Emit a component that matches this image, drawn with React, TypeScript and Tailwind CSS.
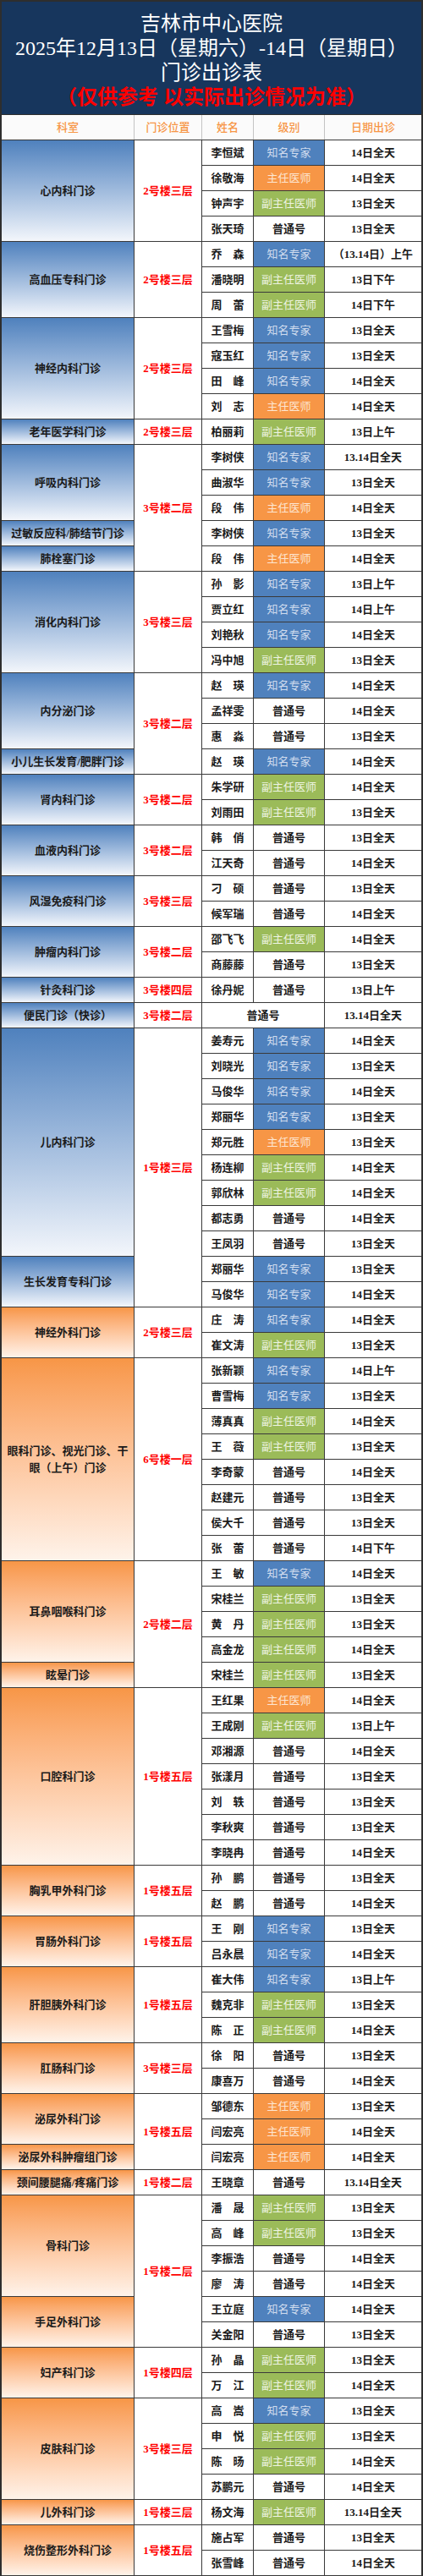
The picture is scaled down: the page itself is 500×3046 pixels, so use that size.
type Rank = "z" | "r" | "f" | "p";
type Row = [string | null, Rank, string];
type Dept = { name: string; rows: Row[] };
type Group = { loc: string; tone: "blue" | "orange"; depts: Dept[] };

const rankStyle: Record<Rank, { label: string; cls: string }> = {
  z: { label: "知名专家", cls: "bg-[#4f81bd] text-[#d0dcee] font-normal" },
  r: { label: "主任医师", cls: "bg-[#f79646] text-[#fde6d2] font-normal" },
  f: { label: "副主任医师", cls: "bg-[#9bbb59] text-[#eef4e2] font-normal" },
  p: { label: "普通号", cls: "bg-white text-[#1a1a1a] font-bold" },
};

// heights for dept cells, n rows of 30px
const heights: Record<number, string> = {
  1: "h-[30px]",
  2: "h-[60px]",
  3: "h-[90px]",
  4: "h-[120px]",
  5: "h-[150px]",
  6: "h-[180px]",
  7: "h-[210px]",
  8: "h-[240px]",
  9: "h-[270px]",
};

const groups: Group[] = [
  { loc: "2号楼三层", tone: "blue", depts: [{ name: "心内科门诊", rows: [["李恒斌", "z", "14日全天"], ["徐敬海", "r", "14日全天"], ["钟声宇", "f", "13日全天"], ["张天琦", "p", "13日全天"]] }] },
  { loc: "2号楼三层", tone: "blue", depts: [{ name: "高血压专科门诊", rows: [["乔　森", "z", "（13.14日）上午"], ["潘晓明", "f", "13日下午"], ["周　蕾", "f", "14日下午"]] }] },
  { loc: "2号楼三层", tone: "blue", depts: [{ name: "神经内科门诊", rows: [["王雪梅", "z", "13日全天"], ["寇玉红", "z", "13日全天"], ["田　峰", "z", "14日全天"], ["刘　志", "r", "14日全天"]] }] },
  { loc: "2号楼三层", tone: "blue", depts: [{ name: "老年医学科门诊", rows: [["柏丽莉", "f", "13日上午"]] }] },
  {
    loc: "3号楼二层",
    tone: "blue",
    depts: [
      { name: "呼吸内科门诊", rows: [["李树侠", "z", "13.14日全天"], ["曲淑华", "z", "13日全天"], ["段　伟", "r", "14日全天"]] },
      { name: "过敏反应科/肺结节门诊", rows: [["李树侠", "z", "13日全天"]] },
      { name: "肺栓塞门诊", rows: [["段　伟", "r", "14日全天"]] },
    ],
  },
  { loc: "3号楼三层", tone: "blue", depts: [{ name: "消化内科门诊", rows: [["孙　影", "z", "13日上午"], ["贾立红", "z", "14日上午"], ["刘艳秋", "z", "14日全天"], ["冯中旭", "f", "13日全天"]] }] },
  {
    loc: "3号楼二层",
    tone: "blue",
    depts: [
      { name: "内分泌门诊", rows: [["赵　瑛", "z", "14日全天"], ["孟祥雯", "p", "14日全天"], ["惠　淼", "p", "13日全天"]] },
      { name: "小儿生长发育/肥胖门诊", rows: [["赵　瑛", "z", "14日全天"]] },
    ],
  },
  { loc: "3号楼二层", tone: "blue", depts: [{ name: "肾内科门诊", rows: [["朱学研", "f", "14日全天"], ["刘雨田", "f", "13日全天"]] }] },
  { loc: "3号楼二层", tone: "blue", depts: [{ name: "血液内科门诊", rows: [["韩　俏", "p", "13日全天"], ["江天奇", "p", "14日全天"]] }] },
  { loc: "3号楼三层", tone: "blue", depts: [{ name: "风湿免疫科门诊", rows: [["刁　硕", "p", "13日全天"], ["候军瑞", "p", "14日全天"]] }] },
  { loc: "3号楼二层", tone: "blue", depts: [{ name: "肿瘤内科门诊", rows: [["邵飞飞", "f", "14日全天"], ["商藤藤", "p", "13日全天"]] }] },
  { loc: "3号楼四层", tone: "blue", depts: [{ name: "针灸科门诊", rows: [["徐丹妮", "p", "13日上午"]] }] },
  { loc: "3号楼二层", tone: "blue", depts: [{ name: "便民门诊（快诊）", rows: [[null, "p", "13.14日全天"]] }] },
  {
    loc: "1号楼三层",
    tone: "blue",
    depts: [
      {
        name: "儿内科门诊",
        rows: [
          ["姜寿元", "z", "14日全天"],
          ["刘晓光", "z", "13日全天"],
          ["马俊华", "z", "14日全天"],
          ["郑丽华", "z", "13日全天"],
          ["郑元胜", "r", "13日全天"],
          ["杨连柳", "f", "14日全天"],
          ["郭欣林", "f", "14日全天"],
          ["都志勇", "p", "14日全天"],
          ["王凤羽", "p", "13日全天"],
        ],
      },
      { name: "生长发育专科门诊", rows: [["郑丽华", "z", "13日全天"], ["马俊华", "z", "14日全天"]] },
    ],
  },
  { loc: "2号楼三层", tone: "orange", depts: [{ name: "神经外科门诊", rows: [["庄　涛", "z", "14日全天"], ["崔文涛", "f", "13日全天"]] }] },
  {
    loc: "6号楼一层",
    tone: "orange",
    depts: [
      {
        name: "眼科门诊、视光门诊、干\n眼（上午）门诊",
        rows: [
          ["张新颖", "z", "14日上午"],
          ["曹雪梅", "z", "13日全天"],
          ["薄真真", "f", "14日全天"],
          ["王　薇", "f", "13日全天"],
          ["李奇蒙", "p", "14日全天"],
          ["赵建元", "p", "13日全天"],
          ["侯大千", "p", "13日全天"],
          ["张　蕾", "p", "14日下午"],
        ],
      },
    ],
  },
  {
    loc: "2号楼二层",
    tone: "orange",
    depts: [
      { name: "耳鼻咽喉科门诊", rows: [["王　敏", "z", "14日全天"], ["宋桂兰", "f", "13日全天"], ["黄　丹", "f", "13日全天"], ["高金龙", "f", "14日全天"]] },
      { name: "眩晕门诊", rows: [["宋桂兰", "f", "13日全天"]] },
    ],
  },
  {
    loc: "1号楼五层",
    tone: "orange",
    depts: [
      {
        name: "口腔科门诊",
        rows: [
          ["王红果", "r", "14日全天"],
          ["王成刚", "f", "13日上午"],
          ["邓湘源", "p", "14日全天"],
          ["张漾月", "p", "13日全天"],
          ["刘　轶", "p", "13日全天"],
          ["李秋爽", "p", "13日全天"],
          ["李晓冉", "p", "14日全天"],
        ],
      },
    ],
  },
  { loc: "1号楼五层", tone: "orange", depts: [{ name: "胸乳甲外科门诊", rows: [["孙　鹏", "p", "13日全天"], ["赵　鹏", "p", "14日全天"]] }] },
  { loc: "1号楼五层", tone: "orange", depts: [{ name: "胃肠外科门诊", rows: [["王　刚", "z", "13日全天"], ["吕永晨", "z", "14日全天"]] }] },
  { loc: "1号楼五层", tone: "orange", depts: [{ name: "肝胆胰外科门诊", rows: [["崔大伟", "z", "13日上午"], ["魏克非", "f", "13日全天"], ["陈　正", "f", "14日全天"]] }] },
  { loc: "3号楼三层", tone: "orange", depts: [{ name: "肛肠科门诊", rows: [["徐　阳", "p", "13日全天"], ["康喜万", "p", "14日全天"]] }] },
  {
    loc: "1号楼五层",
    tone: "orange",
    depts: [
      { name: "泌尿外科门诊", rows: [["邹德东", "r", "13日全天"], ["闫宏亮", "r", "14日全天"]] },
      { name: "泌尿外科肿瘤组门诊", rows: [["闫宏亮", "r", "14日全天"]] },
    ],
  },
  { loc: "1号楼二层", tone: "orange", depts: [{ name: "颈间腰腿痛/疼痛门诊", rows: [["王晓章", "p", "13.14日全天"]] }] },
  {
    loc: "1号楼二层",
    tone: "orange",
    depts: [
      { name: "骨科门诊", rows: [["潘　晟", "f", "13日全天"], ["高　峰", "f", "13日全天"], ["李振浩", "p", "14日全天"], ["廖　涛", "p", "14日全天"]] },
      { name: "手足外科门诊", rows: [["王立庭", "z", "14日全天"], ["关金阳", "p", "13日全天"]] },
    ],
  },
  { loc: "1号楼四层", tone: "orange", depts: [{ name: "妇产科门诊", rows: [["孙　晶", "f", "13日全天"], ["万　江", "f", "14日全天"]] }] },
  { loc: "3号楼三层", tone: "orange", depts: [{ name: "皮肤科门诊", rows: [["高　嵩", "z", "13日全天"], ["申　悦", "f", "13日全天"], ["陈　旸", "f", "14日全天"], ["苏鹏元", "p", "14日全天"]] }] },
  { loc: "1号楼三层", tone: "orange", depts: [{ name: "儿外科门诊", rows: [["杨文海", "f", "13.14日全天"]] }] },
  { loc: "1号楼五层", tone: "orange", depts: [{ name: "烧伤整形外科门诊", rows: [["施占军", "p", "13日全天"], ["张雪峰", "p", "14日全天"]] }] },
];

function DataRow({ row }: { row: Row }) {
  const [name, rank, date] = row;
  const r = rankStyle[rank];
  return (
    <div className="flex h-[30px] border-b border-[#3a3a3a]">
      {name === null ? (
        <div className="flex w-[145px] items-center justify-center border-r border-[#3a3a3a] font-bold">
          {r.label}
        </div>
      ) : (
        <>
          <div className="flex w-[61px] items-center justify-center border-r border-[#3a3a3a] font-bold">
            {name}
          </div>
          <div className={`flex w-[84px] items-center justify-center border-r border-[#3a3a3a] ${r.cls}`}>
            {r.label}
          </div>
        </>
      )}
      <div className="flex flex-1 items-center justify-center font-semibold">{date}</div>
    </div>
  );
}

function GroupBlock({ group }: { group: Group }) {
  const grad =
    group.tone === "blue"
      ? "bg-linear-to-b from-[#4f81bd] to-[#f3f6fb]"
      : "bg-linear-to-b from-[#f79646] to-[#fef3ea]";
  return (
    <div className="flex">
      <div className="flex w-[157px] flex-col border-r border-[#3a3a3a]">
        {group.depts.map((d) => (
          <div
            key={d.name}
            className={`flex items-center justify-center border-b border-[#3a3a3a] px-1 text-center font-bold whitespace-pre-line text-[#1a1a1a] ${heights[d.rows.length]} ${grad}`}
          >
            {d.name}
          </div>
        ))}
      </div>
      <div className="flex w-[80px] items-center justify-center border-r border-b border-[#3a3a3a] font-bold text-[#ff0000]">
        {group.loc}
      </div>
      <div className="flex flex-1 flex-col">
        {group.depts.map((d) =>
          d.rows.map((row, i) => <DataRow key={d.name + i} row={row} />)
        )}
      </div>
    </div>
  );
}

export default function App() {
  return (
    <div
      className="w-[500px] border-2 border-[#2e2e2e] bg-white text-[13px] text-[#1a1a1a]"
      style={{ fontFamily: '"Liberation Serif", "Noto Sans CJK SC", serif' }}
    >
      <div className="flex h-[134px] flex-col items-center border-b border-[#2e2e2e] bg-[#17365d] pt-[12px] text-[24px] leading-[29px] whitespace-nowrap text-white">
        <div>吉林市中心医院</div>
        <div>2025年12月13日（星期六）-14日（星期日）</div>
        <div>门诊出诊表</div>
        <div className="font-bold text-[#ff0000]">（仅供参考 以实际出诊情况为准）</div>
      </div>

      <div className="flex h-[30px] border-b border-[#3a3a3a] bg-[#fbfbfb] font-medium text-[#f79646]">
        <div className="flex w-[157px] items-center justify-center border-r border-[#c4c4c4]">科室</div>
        <div className="flex w-[80px] items-center justify-center border-r border-[#c4c4c4]">门诊位置</div>
        <div className="flex w-[61px] items-center justify-center border-r border-[#c4c4c4]">姓名</div>
        <div className="flex w-[84px] items-center justify-center border-r border-[#c4c4c4]">级别</div>
        <div className="flex flex-1 items-center justify-center">日期出诊</div>
      </div>

      {groups.map((g, i) => (
        <GroupBlock key={i} group={g} />
      ))}
    </div>
  );
}
